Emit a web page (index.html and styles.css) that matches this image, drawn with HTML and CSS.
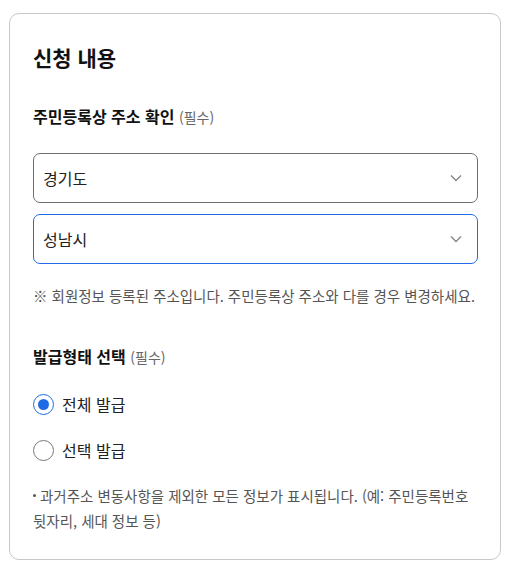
FILE: index.html
```html
<!DOCTYPE html>
<html lang="ko">
<head>
<meta charset="utf-8">
<link rel="stylesheet" href="styles.css">
</head>
<body>
<div class="card">
  <h2 class="title">신청 내용</h2>
  <div class="label">주민등록상 주소 확인 <span class="req">(필수)</span></div>
  <div class="selects">
    <div class="select">
      <span>경기도</span>
      <svg class="chev" width="12" height="8" viewBox="0 0 12 8"><path d="M1 1.5 L6 6.5 L11 1.5" fill="none" stroke="#888" stroke-width="1.4"/></svg>
    </div>
    <div class="select focus">
      <span>성남시</span>
      <svg class="chev" width="12" height="8" viewBox="0 0 12 8"><path d="M1 1.5 L6 6.5 L11 1.5" fill="none" stroke="#888" stroke-width="1.4"/></svg>
    </div>
  </div>
  <p class="hint">※ 회원정보 등록된 주소입니다. 주민등록상 주소와 다를 경우 변경하세요.</p>
  <div class="label label2">발급형태 선택 <span class="req">(필수)</span></div>
  <div class="radios">
    <label class="radio"><span class="circle on"></span>전체 발급</label>
    <label class="radio"><span class="circle"></span>선택 발급</label>
  </div>
  <p class="note"><span class="dot"></span>과거주소 변동사항을 제외한 모든 정보가 표시됩니다. (예: 주민등록번호 뒷자리, 세대 정보 등)</p>
</div>
</body>
</html>
```
FILE: styles.css
```css
* { box-sizing: border-box; }
body {
  margin: 0;
  padding: 13px 12px 0 9px;
  background: #fff;
  font-family: "Noto Sans CJK KR", "Noto Sans", sans-serif;
  color: #1a1a1a;
}
.card {
  width: 492px;
  border: 1px solid #c8c8c8;
  border-radius: 10px;
  padding: 28px 22px 26px 23px;
}
.title {
  margin: 0;
  font-size: 21px;
  line-height: 30px;
  font-weight: 700;
  color: #111;
}
.label {
  margin-top: 32px;
  font-size: 16px;
  line-height: 24px;
  font-weight: 700;
  color: #111;
}
.req {
  font-size: 14px;
  font-weight: 400;
  color: #666;
}
.selects {
  margin-top: 24px;
  display: flex;
  flex-direction: column;
  gap: 11px;
}
.select {
  height: 50px;
  border: 1px solid #6e6e6e;
  border-radius: 7px;
  display: flex;
  align-items: center;
  justify-content: space-between;
  padding: 0 15px 0 9px;
  font-size: 16px;
  color: #222;
}
.select.focus { border-color: #1f6be3; }
.chev { display: block; }
.hint {
  margin: 21px 0 0;
  font-size: 14.5px;
  line-height: 22px;
  color: #555;
  word-break: keep-all;
}
.label2 { margin-top: 37px; }
.radios {
  margin-top: 23px;
  display: flex;
  flex-direction: column;
  gap: 22px;
}
.radio {
  display: flex;
  align-items: center;
  height: 24px;
  font-size: 16px;
  color: #222;
}
.circle {
  width: 21px;
  height: 21px;
  border: 1.5px solid #777;
  border-radius: 50%;
  margin-right: 8px;
  display: flex;
  align-items: center;
  justify-content: center;
  flex: none;
}
.circle.on { border-color: #1f6be3; }
.circle.on::after {
  content: "";
  width: 11px;
  height: 11px;
  border-radius: 50%;
  background: #1f6be3;
}
.note {
  margin: 21px 0 0;
  font-size: 14.5px;
  line-height: 25px;
  color: #555;
  word-break: keep-all;
}
.dot {
  display: inline-block;
  width: 3px;
  height: 3px;
  border-radius: 50%;
  background: #555;
  margin-right: 4px;
  vertical-align: 5px;
}
```
